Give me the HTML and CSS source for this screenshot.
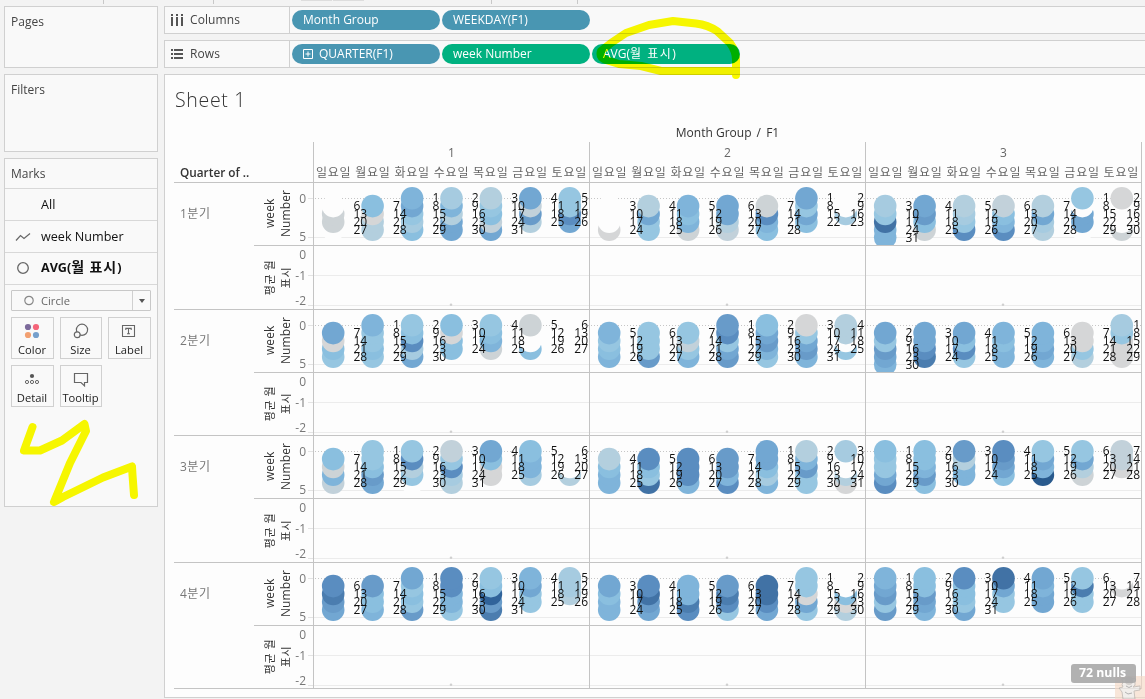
FILE: index.html
```html
<!DOCTYPE html>
<html lang="ko">
<head>
<meta charset="utf-8">
<title>Sheet 1</title>
<link rel="stylesheet" href="styles.css">
</head>
<body>
<div class="app">
  <div class="toolbar">
    <i class="tick t1"></i><i class="tick t2"></i><i class="patch p1"></i><i class="patch p2"></i><i class="tick t3"></i><i class="tick t4"></i>
  </div>
  <div class="workspace">
    <aside class="side">
      <section class="card pages"><h2>Pages</h2></section>
      <section class="card filters"><h2>Filters</h2></section>
      <section class="card marks">
        <h2>Marks</h2>
        <div class="mark-row"><span class="mark-icon"></span><span>All</span></div>
        <div class="mark-row"><svg class="mark-icon" width="18" height="12" viewBox="0 0 18 12"><path d="M2 9.5 6.5 4.5 10 7.5 16 2.5" fill="none" stroke="#666" stroke-width="1.2"/></svg><span>week Number</span></div>
        <div class="mark-row active"><svg class="mark-icon" width="18" height="14" viewBox="0 0 18 14"><circle cx="9" cy="7" r="5.3" fill="none" stroke="#666" stroke-width="1.3"/></svg><span>AVG(<span class="ko">월 표시</span>)</span></div>
        <div class="select"><svg width="12" height="12" viewBox="0 0 12 12"><circle cx="6" cy="5.5" r="4.2" fill="none" stroke="#888" stroke-width="1.2"/></svg><span class="select-text">Circle</span><span class="select-arrow"></span></div>
        <div class="buttons">
          <div class="btn"><svg width="18" height="18" viewBox="0 0 18 18"><circle cx="5" cy="5" r="3.1" fill="#7c6a9b"/><circle cx="13" cy="5" r="3.1" fill="#f5657a"/><circle cx="5" cy="13" r="3.1" fill="#f2a071"/><circle cx="13" cy="13" r="3.1" fill="#76a0cc"/></svg><span>Color</span></div>
          <div class="btn"><svg width="18" height="18" viewBox="0 0 18 18"><g fill="#f9f9f9" stroke="#666" stroke-width="1.2"><circle cx="10" cy="7.8" r="5.6"/><circle cx="5.2" cy="12.8" r="2.9"/></g></svg><span>Size</span></div>
          <div class="btn"><svg width="18" height="18" viewBox="0 0 18 18"><path d="M2.5 3.5h12v11h-12zM5.8 8V6.4h5.4V8M8.5 6.4v5.4M7 11.8h3" fill="none" stroke="#666" stroke-width="1.1"/></svg><span>Label</span></div>
          <div class="btn"><svg width="18" height="18" viewBox="0 0 18 18"><circle cx="9" cy="6" r="2.1" fill="#555"/><g fill="none" stroke="#666"><circle cx="4" cy="12" r="1.6"/><circle cx="9" cy="12" r="1.6"/><circle cx="14" cy="12" r="1.6"/></g></svg><span>Detail</span></div>
          <div class="btn"><svg width="18" height="18" viewBox="0 0 18 18"><path d="M2.5 3.5h13v9h-3v3.4L9 12.5H2.5z" fill="none" stroke="#666" stroke-width="1.2"/></svg><span>Tooltip</span></div>
        </div>
      </section>
    </aside>
    <main class="main">
      <div class="shelf">
        <div class="shelf-name"><svg width="14" height="14" viewBox="0 0 14 14" fill="#555"><path d="M1 1h2v2H1zM6 1h2v2H6zM11 1h2v2h-2zM1 4h2v9H1zM6 4h2v9H6zM11 4h2v9h-2z"/></svg>Columns</div>
        <div class="pills"><span class="pill blue">Month Group</span><span class="pill blue">WEEKDAY(F1)</span></div>
      </div>
      <div class="shelf">
        <div class="shelf-name"><svg width="14" height="14" viewBox="0 0 14 14" fill="#555"><path d="M1 2h2v2H1zM4 2h9v2H4zM1 6h2v2H1zM4 6h9v2H4zM1 10h2v2H1zM4 10h9v2H4z"/></svg>Rows</div>
        <div class="pills"><span class="pill blue"><svg class="plus" width="10" height="10" viewBox="0 0 10 10"><path d="M.5.5h9v9h-9zM2.500 5h5M5 2.500v5" fill="none" stroke="#fff"/></svg>QUARTER(F1)</span><span class="pill green">week Number</span><span class="pill green">AVG(<span class="ko">월 표시</span>)</span></div>
      </div>
      <section class="sheet">
        <h1>Sheet 1</h1>
        <div class="table">
          <div class="super-title">Month Group <span class="slash">/</span> F1</div>
          <div class="head">
            <div class="corner">Quarter of ..</div>
            <div class="months" id="months"></div>
          </div>
          <div class="body" id="body"></div>
        </div>
      </section>
    </main>
  </div>
  <svg class="stamp" width="30" height="30" viewBox="0 0 30 30">
    <rect y="7" width="30" height="23" fill="#f6d9c5" opacity=".85"/>
    <path d="M8 13q-3-5 1-3 5-4 9 0 4-2 2 3 1 4-2 5l7-1v4l-6 1 1 8H8l-1-7-3-4 4-1q-2-2 0-5z" fill="#eeeae6" stroke="#b8aea6"/>
    <circle cx="14" cy="12" r="4" fill="#c3bfbb"/><path d="M11 17q3 3 6 0M10 23l3 2 4-1" fill="none" stroke="#999"/>
  </svg>
  <div class="nulls">72 nulls</div>
  <svg class="ink" width="1145" height="699" viewBox="0 0 1145 699">
    <path d="M32.500 427 24 450.500H40L62 440.500 84.500 424 86 431 70 463 54 502 63 497 103 477.500 132 466.500 132.500 475 134 495"/>
    <path d="M736 75V60Q736 51 730 43L717 31Q708 25 696 23.500L673 21 649 25 626 33 611 43 601 51Q599 57 606 60L619 64 641 66 661 71H735"/>
  </svg>
</div>
<script src="chart.js"></script>
</body>
</html>
```
FILE: styles.css
```css
* { box-sizing: border-box; }
body { margin: 0; background: #f3f3f3; font-family: "Open Sans", "Noto Sans CJK KR", sans-serif; color: #333; }
.app { position: relative; width: 1145px; height: 699px; overflow: hidden; }
.toolbar { height: 6px; display: flex; align-items: flex-start; }
.tick { width: 1px; height: 4px; background: #c8c8c8; }
.patch { width: 31px; height: 1px; background: #ddd; }
.t1 { margin-left: 103px; }
.t2 { margin-left: 109px; }
.p1 { margin-left: 87px; }
.p2 { margin-left: 1px; }
.t3 { margin-left: 127px; }
.t4 { margin-left: 85px; }
.workspace { display: flex; gap: 6px; padding-left: 4px; }
.side { width: 154px; display: flex; flex-direction: column; gap: 6px; }
.card { border: 1px solid #d0d0d0; background: #f9f9f9; }
.card h2 { margin: 0; padding: 6px 6px 0; font-size: 12px; line-height: 18px; font-weight: 400; color: #444; }
.pages { height: 62px; }
.filters { height: 78px; }
.marks { height: 349px; }
.marks h2 { height: 29px; }
.mark-row { height: 32px; border-top: 1px solid #d8d8d8; display: flex; align-items: center; font-size: 12.6px; line-height: 18px; color: #111; white-space: nowrap; }
.mark-icon { width: 18px; margin: 0 9px; }
.active { height: 33px; border-bottom: 1px solid #d8d8d8; font-weight: 700; padding-bottom: 2px; }
.active .ko { font-size: 14px; letter-spacing: .9px; }
.select { margin: 5px 6px 0; height: 21px; border: 1px solid #c8c8c8; display: flex; align-items: center; padding-left: 11px; font-size: 11.2px; color: #666; border-radius: 1px; }
.select-text { margin-left: 6px; flex: 1; }
.select-arrow { width: 18px; height: 19px; border-left: 1px solid #d0d0d0; display: flex; align-items: center; justify-content: center; }
.select-arrow::after { content: ""; border: 3.500px solid transparent; border-top: 4px solid #555; border-bottom: 0; }
.buttons { display: grid; grid-template-columns: 43px 42px 43px; gap: 6px; margin: 6px 6px 0; }
.btn { height: 42px; border: 1px solid #d0d0d0; display: flex; flex-direction: column; align-items: center; font-size: 11.200px; line-height: 14px; padding: 4px 1px 0 0; gap: 3px; color: #222; }
.btn svg { flex: none; }
.main { width: 990px; flex: none; display: flex; flex-direction: column; gap: 6px; }
.shelf { height: 28px; border: 1px solid #d0d0d0; background: #f9f9f9; display: flex; }
.shelf-name { width: 125px; border-right: 1px solid #d0d0d0; display: flex; align-items: center; gap: 6px; padding: 0 0 1px 5px; font-size: 12px; color: #444; letter-spacing: .1px; }
.pills { display: flex; align-items: center; gap: 2px; padding-left: 2px; }
.pill { width: 148px; height: 20px; border-radius: 10px; padding: 0 0 1px 11px; display: flex; align-items: center; font-size: 12px; line-height: 18px; color: #fff; white-space: nowrap; }
.pill .ko { letter-spacing: 1.500px; white-space: pre; }
.blue { background: #4996b2; }
.green { background: #00b180; }
.plus { margin-right: 6px; }
.sheet { height: 624px; background: #fdfdfd; border: 1px solid #d0d0d0; }
.sheet h1 { margin: 0; padding: 11px 10px 0; height: 49px; font-size: 19.500px; line-height: 28px; font-weight: 300; letter-spacing: .7px; color: #333; }
.table { width: 968px; margin-left: 9px; }
.super-title { margin-left: 139px; text-align: center; font-size: 12px; line-height: 18px; height: 18px; color: #333; }
.slash { margin: 0 2px; }
.head { display: flex; height: 41px; border-bottom: 1px solid #c4c4c4; }
.corner { width: 139px; display: flex; align-items: flex-end; padding: 0 0 2px 6px; font-size: 11.800px; font-weight: 600; color: #333; }
.months { display: flex; }
.month { width: 276px; border-left: 1px solid #c4c4c4; }
.month:last-child { width: 277px; border-right: 1px solid #c4c4c4; }
.month-no { height: 21px; line-height: 21px; text-align: center; font-size: 12px; color: #666; }
.days { display: grid; grid-template-columns: repeat(7, 1fr); font-size: 12px; line-height: 19px; letter-spacing: .8px; color: #666; text-align: center; white-space: nowrap; }
.quarter { display: flex; border-bottom: 1px solid #c4c4c4; }
.q-name { width: 80px; padding: 22px 0 0 6px; font-size: 12px; line-height: 17px; letter-spacing: .5px; color: #777; }
.band { display: flex; }
.band + .band { border-top: 1px solid #c4c4c4; }
.axis-name { width: 36px; display: flex; align-items: center; justify-content: center; }
.axis-name span { writing-mode: vertical-rl; text-orientation: sideways; transform: rotate(180deg); text-align: center; font-size: 12px; line-height: 16px; letter-spacing: .1px; color: #333; margin-left: 12px; white-space: nowrap; }
.second .axis-name span { font-size: 11px; letter-spacing: .5px; }
.plot { display: block; flex: none; }
.num { font: 12px "Open Sans", sans-serif; fill: #111; }
.tick-label { font: 12px "Open Sans", sans-serif; fill: #777; }
.nulls { position: absolute; left: 1071px; top: 664px; width: 65px; height: 19px; border-radius: 3px; background: rgba(166, 166, 166, .88); color: #fff; font-weight: 700; font-size: 12.300px; line-height: 18px; padding-left: 8px; }
.stamp { position: absolute; left: 1115px; top: 669px; opacity: .75; }
.ink { position: absolute; left: 0; top: 0; fill: none; stroke: #fcfc00; stroke-width: 8px; stroke-linejoin: round; stroke-linecap: round; mix-blend-mode: multiply; pointer-events: none; }
```
FILE: chart.js
```js
// Shade codes, from missing (w) through grey to dark blue.
const shades = {
  w: '#fdfdfd', g: '#d5d6d7', j: '#cdd3d6', h: '#c2d1da', i: '#b3cfde', a: '#a6cbe0',
  b: '#96c6e1', c: '#8abfdf', d: '#7fb4da', e: '#72a7d2', f: '#689bc9', k: '#5a8dc0',
  m: '#4b7daf', n: '#4172a5', o: '#30639a', p: '#295a8d'
};
// first: weekday of the 1st (Sunday = 0); cols: shade of each week, per weekday.
const months = [
  { first: 2, len: 31, cols: ['wjjw', 'cgii', 'debac', 'adiee', 'ibche', 'ehfi', 'bbke'] },
  { first: 5, len: 28, cols: ['wwwg', 'iebb', 'dcdj', 'eeih', 'jkdc', 'ebec', 'wwaw'] },
  { first: 5, len: 31, cols: ['abndd', 'efcj', 'iabk', 'hcdk', 'ieai', 'bweew', 'gwwwj'] },
  { first: 1, len: 30, cols: ['egcb', 'dbbcb', 'bckae', 'cgcc', 'bcdj', 'jwwc', 'wwww'] },
  { first: 3, len: 31, cols: ['dbcd', 'bbbf', 'bhbd', 'fkbef', 'cefdb', 'gbefd', 'iiwb'] },
  { first: 6, len: 30, cols: ['ebfed', 'eekm', 'eckb', 'dcdd', 'dded', 'ggbi', 'abggg'] },
  { first: 1, len: 31, cols: ['cjdh', 'bbcfe', 'bkibw', 'hbkai', 'ecgg', 'cdda', 'wwwi'] },
  { first: 4, len: 31, cols: ['icdd', 'kcbn', 'kkkd', 'ffdk', 'eecad', 'idfbb', 'awwig'] },
  { first: 0, len: 30, cols: ['cbbek', 'ccdfc', 'fidd', 'kfec', 'bedp', 'beij', 'hhgw'] },
  { first: 2, len: 31, cols: ['kmfe', 'fccd', 'ebcbf', 'kkddb', 'bcofm', 'debb', 'aaiw'] },
  { first: 5, len: 30, cols: ['ecdd', 'knfe', 'ddmk', 'fmkb', 'nnke', 'bbgeb', 'wwcgi'] },
  { first: 0, len: 31, cols: ['defbf', 'ccfed', 'kccbe', 'nebb', 'edee', 'bmbb', 'wgww'] }
];
const W = 276, STEP = W / 7, ZERO = 15.3, WEEK = 7.85;

function svg(w, h, inner) {
  return `<svg class="plot" width="${w}" height="${h}" viewBox="0 0 ${w} ${h}">${inner}</svg>`;
}
function border(last) {
  return `<path d="M.5 0V63${last ? 'M276.500 0V63' : ''}" stroke="#c4c4c4" fill="none"/>`;
}
function weekPane(m, last) {
  let s = `<path d="M0 54.500H276" stroke="#ececec"/><path d="M2 15.500H276" stroke="#c6c6c6" stroke-dasharray="1 2"/>`;
  m.cols.forEach((codes, d) => {
    const start = d < m.first ? 1 : 0;
    for (let n = codes.length - 1; n >= 0; n--) {
      s += `<circle cx="${(STEP * (d + .5) + .5).toFixed(1)}" cy="${(ZERO + WEEK * (start + n)).toFixed(1)}" r="11.300" fill="${shades[codes[n]]}"/>`;
    }
  });
  for (let day = 1; day <= m.len; day++) {
    const pos = m.first + day - 1, d = pos % 7, w = Math.floor(pos / 7);
    const y = (ZERO + 3.800 + 8 * w).toFixed(1);
    s += d === 6
      ? `<text class="num" x="275" y="${y}" text-anchor="end">${day}</text>`
      : `<text class="num" x="${(STEP * (d + .5) + 20.800).toFixed(1)}" y="${y}">${day}</text>`;
  }
  return svg(last ? 277 : W, 62, s + border(last));
}
function avgPane(last, h) {
  return svg(last ? 277 : W, h, `<path d="M0 29.500H276M0 59.500H276" stroke="#ececec"/><circle cx="138" cy="58.800" r="1.300" fill="#d0d0d0"/>` + border(last));
}
function axis(h, labels, lines) {
  return svg(23, h, labels.map(([t, y]) => `<text class="tick-label" x="16" y="${y}" text-anchor="end">${t}</text>`).join('') +
    lines.map(y => `<path d="M18 ${y}H23" stroke="#e4e4e4"/>`).join(''));
}

document.getElementById('months').innerHTML = [1, 2, 3].map(n =>
  `<div class="month"><div class="month-no">${n}</div><div class="days">${[...'일월화수목금토'].map(c => `<span>${c}요일</span>`).join('')}</div></div>`).join('');

document.getElementById('body').innerHTML = [0, 1, 2, 3].map(q => {
  const h = q % 2 ? 62 : 63;
  const set = months.slice(q * 3, q * 3 + 3);
  return `<div class="quarter"><div class="q-name">${q + 1}분기</div><div>
    <div class="band"><div class="axis-name"><span>week<br>Number</span></div>${axis(62, [['0', 20], ['5', 58]], [15.5, 54.5])}${set.map((m, i) => weekPane(m, i === 2)).join('')}</div>
    <div class="band second"><div class="axis-name"><span>평균 월<br>표시</span></div>${axis(h, [['0', 13], ['-1', 34], ['-2', 59]], [29.5, 59.5])}${set.map((m, i) => avgPane(i === 2, h)).join('')}</div>
  </div></div>`;
}).join('');
```
